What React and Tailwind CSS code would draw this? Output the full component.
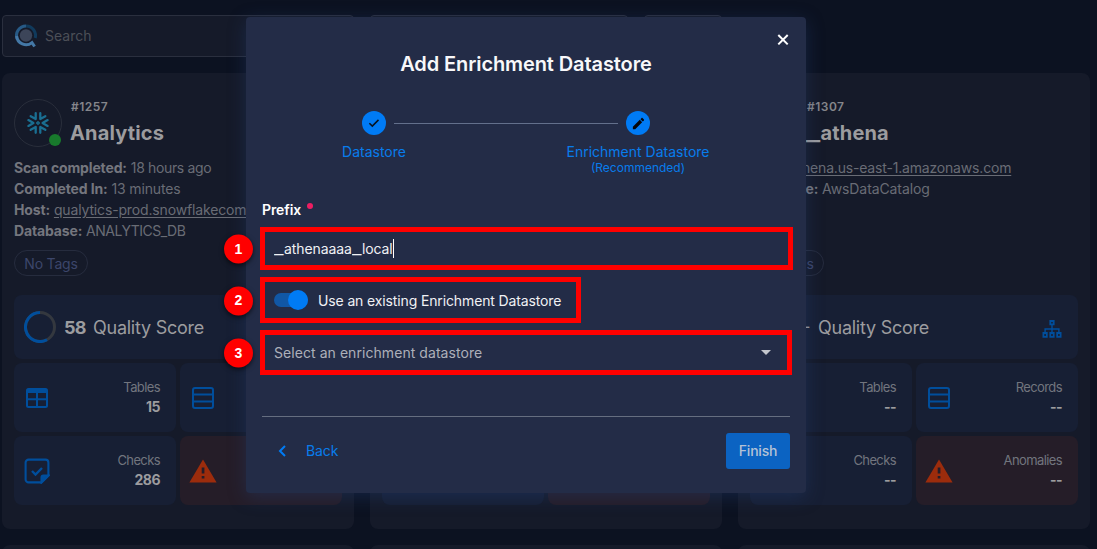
import React from "react";

function SearchLogo() {
  return (
    <svg width="22" height="24" viewBox="0 0 22 24" fill="none">
      <circle cx="11" cy="11.5" r="6.2" fill="#3c4559" />
      <path d="M11 2a9.5 9.5 0 0 1 9.2 12" stroke="#103a5c" strokeWidth="3" />
      <path d="M2.2 15A9.5 9.5 0 0 1 11 2" stroke="#275a86" strokeWidth="3" />
      <path d="M1.6 12A9.5 9.5 0 0 0 17 18.6l2.6 3.9" stroke="#4478a6" strokeWidth="3" />
    </svg>
  );
}

function SnowflakeIcon() {
  return (
    <svg width="24" height="24" viewBox="0 0 24 24" fill="none" stroke="#1a6f92" strokeWidth="2.3" strokeLinecap="round" strokeLinejoin="round">
      {[0, 60, 120, 180, 240, 300].map((angle) => (
        <path key={angle} d="M21.6 9.1 16.6 12l5 2.9" transform={`rotate(${angle} 12 12)`} />
      ))}
      <path d="M12 10.6 13.4 12 12 13.4 10.6 12z" strokeWidth="1.2" />
    </svg>
  );
}

function TableIcon() {
  return (
    <svg width="24" height="22" viewBox="0 0 24 22" fill="none" stroke="#004e9c" strokeWidth="2">
      <rect x="2" y="2" width="20" height="18" rx="1.5" />
      <path d="M2 4h20" strokeWidth="4" />
      <path d="M2 12.2h20M12 5v15" />
    </svg>
  );
}

function RowsIcon() {
  return (
    <svg width="24" height="24" viewBox="0 0 24 24" fill="none" stroke="#004e9c" strokeWidth="2">
      <rect x="2" y="2" width="20" height="20" rx="2" />
      <path d="M2 8.6h20M2 15.4h20" />
    </svg>
  );
}

function ChecksIcon() {
  return (
    <svg width="26" height="26" viewBox="0 0 26 26" fill="none" stroke="#004e9c" strokeWidth="2.1">
      <path d="M17.5 24.4H4.6a3 3 0 0 1-3-3V4.6a3 3 0 0 1 3-3h16.8a3 3 0 0 1 3 3v13z" />
      <path d="M17.5 24.4v-5a1.9 1.9 0 0 1 1.9-1.9h5z" fill="#004e9c" />
      <path d="M8 13l3.5 3.5 6.5-6.5" strokeWidth="2.4" />
    </svg>
  );
}

function AlertIcon() {
  return (
    <svg width="28" height="24" viewBox="0 0 28 24">
      <path d="M14 0.4 27.6 23.6H0.4z" fill="#9c2c0c" />
      <path d="M12.7 8.6h2.7v6h-2.7zM12.7 17h2.7v2.6h-2.7z" fill="#251d28" />
    </svg>
  );
}

function SitemapIcon() {
  return (
    <svg width="20" height="18" viewBox="0 0 20 18" fill="none" stroke="#004e9c" strokeWidth="1.8">
      <path d="M8.3 1h3.4v3.4H8.3zM1.4 13h3.4v3.8H1.4zM8.3 13h3.4v3.8H8.3zM15.2 13h3.4v3.8h-3.4z" />
      <path d="M10 4.5V13M3.1 13V9h13.8v4" strokeWidth="1.4" />
    </svg>
  );
}

function ScoreRing({ empty }) {
  return (
    <svg width="32" height="32" viewBox="0 0 32 32" fill="none" strokeWidth="3">
      <circle cx="16" cy="16" r="14.5" stroke="#34383f" />
      {!empty && <path d="M16 1.5A14.5 14.5 0 1 0 23 28.7" stroke="#004e9c" />}
    </svg>
  );
}

/* Underscore widened to fill its box. */
function Underscore({ large }) {
  return large ? (
    <span className="inline-block w-[14.5px] origin-left scale-x-[1.5]">_</span>
  ) : (
    <span className="inline-block w-[10px] origin-left scale-x-[1.5]">_</span>
  );
}

function Tile({ icon, label, value, alert }) {
  return (
    <div
      className={
        alert
          ? "flex h-[69px] items-center justify-between rounded-lg bg-[#251d28] pr-4 pl-[9px]"
          : "flex h-[69px] items-center justify-between rounded-lg bg-[#171f34] pr-4 pl-[9px]"
      }
    >
      <div className="flex w-7 justify-center">{icon}</div>
      {label && (
        <div className="flex flex-col items-end pb-[2px]">
          <div className="text-[13px] leading-[19px] tracking-[-0.6px] text-[#72757e]">{label}</div>
          <div className="text-[14px] leading-[19px] font-bold tracking-[-0.5px] text-[#9c9c9f]">{value}</div>
        </div>
      )}
    </div>
  );
}

function Card({ id, name, details, score, tables, records, checks, anomalies, status }) {
  const empty = score === "--";
  return (
    <div className="h-[456px] w-[352px] shrink-0 rounded-lg bg-[#151a29] px-3 pt-6">
      <div className="flex h-[60px] gap-2">
        <div className="relative mt-[2px] flex size-12 shrink-0 items-center justify-center rounded-full border border-[#292e3b]">
          <SnowflakeIcon />
          {status && <span className="absolute right-0 bottom-0 size-3 rounded-full bg-[#187a2c]" />}
        </div>
        <div className="pt-px">
          <div className="pl-px text-[12px] leading-[18px] font-semibold tracking-[0.5px] text-[#85868b]">{id}</div>
          <div className="text-[20px] leading-[34px] font-bold tracking-[0.15px] text-[#9c9c9f]">
            {name.startsWith("_") ? (
              <>
                <Underscore large />
                {name.slice(1)}
              </>
            ) : (
              name
            )}
          </div>
        </div>
      </div>
      <div className="h-[93px] text-[14px] leading-[21px] whitespace-nowrap text-[#696c75]">
        {details.map(({ key, value, spacing }) => (
          <div key={key}>
            <span className="font-bold tracking-[-0.15px] text-[#74767e]">{key}</span>{" "}
            <span className={spacing}>{value}</span>
          </div>
        ))}
      </div>
      <div className="flex h-[26px] w-[74px] items-center justify-center rounded-full border border-[#262c3e] text-[14px] tracking-[-0.2px] text-[#3c466b]">
        No Tags
      </div>
      <div className="mt-[19px] flex h-16 items-center rounded-lg bg-[#171f34] px-[10px]">
        <ScoreRing empty={empty} />
        <span
          className={
            empty
              ? "ml-2 w-[10px] text-[12px] font-bold tracking-[-1px] text-[#9c9c9f]"
              : "ml-2 w-[21px] text-[18px] font-bold tracking-[-0.8px] text-[#9c9c9f]"
          }
        >
          {score}
        </span>
        <span className="ml-2 text-[18px] tracking-[-0.25px] text-[#9c9c9f]">Quality Score</span>
        <span className="mt-1 mr-[6px] ml-auto">
          <SitemapIcon />
        </span>
      </div>
      <div className="mt-1 grid grid-cols-2 gap-1">
        <Tile icon={<TableIcon />} label={tables && "Tables"} value={tables} />
        <Tile icon={<RowsIcon />} label={records && "Records"} value={records} />
        <Tile icon={<ChecksIcon />} label={checks && "Checks"} value={checks} />
        <Tile icon={<AlertIcon />} label={anomalies && "Anomalies"} value={anomalies} alert />
      </div>
    </div>
  );
}

const cards = [
  {
    id: "#1257",
    name: "Analytics",
    status: true,
    details: [
      { key: "Scan completed:", value: "18 hours ago", spacing: "tracking-[-0.35px]" },
      { key: "Completed In:", value: "13 minutes", spacing: "tracking-[-0.15px]" },
      {
        key: "Host:",
        value: "qualytics-prod.snowflakecom",
        spacing: "underline underline-offset-2 tracking-[-0.15px]",
      },
      { key: "Database:", value: "ANALYTICS_DB", spacing: "tracking-[-0.5px]" },
    ],
    score: "58",
    tables: "15",
    checks: "286",
  },
  { id: "", name: "", details: [], score: "--" },
  {
    id: "#1307",
    name: "_athena",
    details: [
      {
        key: "Host:",
        value: "athena.us-east-1.amazonaws.com",
        spacing: "underline underline-offset-2 tracking-[-0.18px]",
      },
      { key: "Database:", value: "AwsDataCatalog", spacing: "tracking-[-0.1px]" },
    ],
    score: "--",
    tables: "--",
    records: "--",
    checks: "--",
    anomalies: "--",
  },
];

function Step({ icon, label, note }) {
  return (
    <div className="flex w-[176px] flex-col items-center">
      <div className="flex size-6 items-center justify-center rounded-full bg-[#007bf5]">{icon}</div>
      <div className="mt-[7px] text-[14px] leading-[20px] whitespace-nowrap text-[#087cec]">{label}</div>
      {note && <div className="text-[12px] leading-[12px] text-[#087cec]">{note}</div>}
    </div>
  );
}

function Marker({ children }) {
  return (
    <span className="absolute top-[calc(50%+0.5px)] -left-[41px] flex size-[29px] -translate-y-1/2 items-center justify-center rounded-full bg-[#ff0000] pb-[2px] font-['Liberation_Sans',sans-serif] text-[14px] leading-none font-bold tracking-normal text-white shadow-[0_2px_5px_rgba(0,0,0,0.6)]">
      {children}
    </span>
  );
}

function Dialog() {
  return (
    <div className="relative h-[476px] w-[560px] rounded bg-[#232c47] shadow-[0_4px_18px_rgba(36,70,130,0.35)]">
      <svg className="absolute top-[17px] right-[17px]" width="12" height="12" viewBox="0 0 12 12" stroke="#fff" strokeWidth="2">
        <path d="M1.3 1l9.4 9.4M10.7 1l-9.4 9.4" />
      </svg>
      <h2 className="pt-8 text-center text-[20px] leading-[30px] font-semibold tracking-[-0.1px] text-[#f8f8fa]">
        Add Enrichment Datastore
      </h2>
      <div className="mt-8 flex pl-10">
        <Step
          label="Datastore"
          icon={
            <svg width="12" height="10" viewBox="0 0 12 10" fill="none" stroke="#06121f" strokeWidth="1.5">
              <path d="M1.4 5.2l2.9 2.9 6.2-6.2" />
            </svg>
          }
        />
        <div className="-mx-[68px] mt-3 h-px w-[224px] bg-[#63708c]" />
        <Step
          label="Enrichment Datastore"
          note="(Recommended)"
          icon={
            <svg width="15" height="15" viewBox="0 0 24 24" fill="#06080c">
              <path d="M20.71 7.04c.39-.39.39-1.04 0-1.41l-2.34-2.34c-.37-.39-1.02-.39-1.41 0l-1.84 1.83 3.75 3.75M3 17.25V21h3.75L17.81 9.93l-3.75-3.75z" />
            </svg>
          }
        />
      </div>
      <div className="mt-[25px] flex h-5 items-center px-4 text-[14px] font-semibold tracking-[-0.1px] text-white">
        Prefix
        <span className="mb-[7px] ml-[6px] size-[6px] rounded-full bg-[#ee1d62]" />
      </div>
      <div className="mt-2 flex flex-col items-start pl-[14px] text-[14px]">
        <div className="relative flex h-[43px] w-[533px] items-center border-[5px] border-[#ff0000] pl-[9px] text-[#f0f1f4]">
          <Marker>1</Marker>
          <span className="pb-px tracking-[-0.08px]">
            <Underscore />
            athenaaaa
            <Underscore />
            local
          </span>
          <span className="h-[19px] w-px bg-white" />
        </div>
        <div className="relative mt-[7px] flex h-[46px] w-[321px] items-center border-[5px] border-[#ff0000] pl-[9px] text-[#f0f1f4]">
          <Marker>2</Marker>
          <span className="flex h-[14px] w-[34px] items-center justify-end rounded-full bg-[#1157a5]">
            <span className="size-5 shrink-0 rounded-full bg-[#007bf5]" />
          </span>
          <span className="ml-[10px] pt-px tracking-[-0.13px] whitespace-nowrap">Use an existing Enrichment Datastore</span>
        </div>
        <div className="relative mt-[7px] flex h-[45px] w-[532px] items-center justify-between border-[5px] border-[#ff0000] pr-4 pl-[9px] tracking-[0.06px] text-[#adb0ba]">
          <Marker>3</Marker>
          <span className="pb-px">Select an enrichment datastore</span>
          <svg width="10" height="5" viewBox="0 0 10 5" fill="#c3c6cd">
            <path d="M0 0h10L5 5z" />
          </svg>
        </div>
      </div>
      <div className="mx-4 mt-[41px] flex items-center justify-between border-t border-[#656e80] pt-4">
        <div className="flex items-center pl-4 text-[14px] text-[#087cec]">
          <svg width="8" height="12" viewBox="0 0 8 12" fill="none" stroke="#007bf5" strokeWidth="2">
            <path d="M7 1L2 6l5 5" />
          </svg>
          <span className="ml-5 pb-px tracking-[-0.1px]">Back</span>
        </div>
        <button className="h-9 w-16 rounded-[3px] bg-[#0b63c2] pb-px text-[14px] font-medium tracking-[-0.2px] text-[#b4c2d6]">
          Finish
        </button>
      </div>
    </div>
  );
}

export default function App() {
  return (
    <div className="relative h-[549px] w-[1097px] overflow-hidden bg-[#0c1221] font-['Inter',sans-serif]">
      <div className="flex gap-4 px-[2px] pt-[15px]">
        <div className="flex h-[42px] w-[352px] items-center rounded border border-[#2a2f3e] bg-[#151a29] pl-3 text-[14px] text-[#4c4f57]">
          <SearchLogo />
          <span className="ml-2 pb-[2px]">Search</span>
        </div>
        <div className="h-[42px] w-[258px] rounded border border-[#2a2f3e] bg-[#151a29]" />
        <div className="h-[42px] w-[78px] rounded border border-[#2a2f3e] bg-[#151a29]" />
      </div>
      <div className="mt-4 grid grid-cols-[352px_352px_352px] gap-4 px-[2px]">
        {cards.map((card) => (
          <Card key={card.id + "-card"} {...card} />
        ))}
        {cards.map((card) => (
          <div key={card.id + "-next"} className="h-8 rounded-lg bg-[#151a29]" />
        ))}
      </div>
      <div className="absolute inset-0 flex items-start justify-center pt-[17px] pr-[45px]">
        <Dialog />
      </div>
    </div>
  );
}
